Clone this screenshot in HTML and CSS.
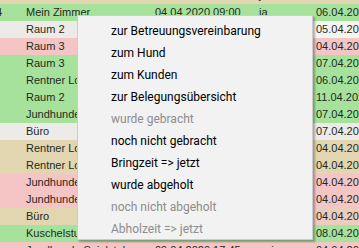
FILE: index.html
```html
<!DOCTYPE html>
<html>
<head>
<meta charset="utf-8">
<link rel="stylesheet" href="styles.css">
</head>
<body>
<div class="view">
  <div class="grid">
    <div class="row tan"><span class="c0"></span><span class="c1">Jundhunde</span><span class="c2">04.04.2020 09:00</span><span class="c3">ja</span><span class="c4">04.04.2020</span></div>
    <div class="row green"><span class="c0">4</span><span class="c1">Mein Zimmer</span><span class="c2">04.04.2020 09:00</span><span class="c3">ja</span><span class="c4">06.04.2020</span></div>
    <div class="row grey"><span class="c0"></span><span class="c1">Raum 2</span><span class="c2">04.04.2020 09:00</span><span class="c3">ja</span><span class="c4 white">05.04.2020</span></div>
    <div class="row pink"><span class="c0"></span><span class="c1">Raum 3</span><span class="c2">04.04.2020 09:00</span><span class="c3">ja</span><span class="c4">04.04.2020</span></div>
    <div class="row green"><span class="c0"></span><span class="c1">Raum 3</span><span class="c2">04.04.2020 09:00</span><span class="c3">ja</span><span class="c4">07.04.2020</span></div>
    <div class="row green"><span class="c0"></span><span class="c1">Rentner Lounge</span><span class="c2">04.04.2020 09:00</span><span class="c3">ja</span><span class="c4">06.04.2020</span></div>
    <div class="row green"><span class="c0"></span><span class="c1">Raum 2</span><span class="c2">04.04.2020 09:00</span><span class="c3">ja</span><span class="c4">11.04.2020</span></div>
    <div class="row green"><span class="c0"></span><span class="c1">Jundhunde</span><span class="c2">04.04.2020 09:00</span><span class="c3">ja</span><span class="c4">07.04.2020</span></div>
    <div class="row grey"><span class="c0"></span><span class="c1">Büro</span><span class="c2">04.04.2020 09:00</span><span class="c3">ja</span><span class="c4">07.04.2020</span></div>
    <div class="row tan"><span class="c0"></span><span class="c1">Rentner Lounge</span><span class="c2">04.04.2020 09:00</span><span class="c3">ja</span><span class="c4">04.04.2020</span></div>
    <div class="row tan"><span class="c0"></span><span class="c1">Rentner Lounge</span><span class="c2">04.04.2020 09:00</span><span class="c3">ja</span><span class="c4">04.04.2020</span></div>
    <div class="row pink"><span class="c0"></span><span class="c1">Jundhunde</span><span class="c2">04.04.2020 09:00</span><span class="c3">ja</span><span class="c4">04.04.2020</span></div>
    <div class="row pink"><span class="c0"></span><span class="c1">Jundhunde</span><span class="c2">04.04.2020 09:00</span><span class="c3">ja</span><span class="c4">04.04.2020</span></div>
    <div class="row tan"><span class="c0"></span><span class="c1">Büro</span><span class="c2">04.04.2020 09:00</span><span class="c3">ja</span><span class="c4 pinkc">04.04.2020</span></div>
    <div class="row green"><span class="c0"></span><span class="c1">Kuschelstube</span><span class="c2">04.04.2020 09:00</span><span class="c3">ja</span><span class="c4">08.04.2020</span></div>
    <div class="row pink"><span class="c0"></span><span class="c1">Jundhunde Spielstube</span><span class="c2">09.04.2020 17:45</span><span class="c3">nein</span><span class="c4">04.04.2020</span></div>
  </div>

  <div class="menu">
    <div class="item">zur Betreuungsvereinbarung</div>
    <div class="item">zum Hund</div>
    <div class="item">zum Kunden</div>
    <div class="item">zur Belegungsübersicht</div>
    <div class="item disabled">wurde gebracht</div>
    <div class="item">noch nicht gebracht</div>
    <div class="item">Bringzeit =&gt; jetzt</div>
    <div class="item">wurde abgeholt</div>
    <div class="item disabled">noch nicht abgeholt</div>
    <div class="item disabled">Abholzeit =&gt; jetzt</div>
  </div>
</div>
</body>
</html>
```

FILE: styles.css
```css
html, body {
  margin: 0;
  padding: 0;
  background: #ffffff;
}
.view {
  position: relative;
  width: 359px;
  height: 248px;
  overflow: hidden;
}
.grid {
  display: flex;
  flex-direction: column;
  margin-top: -13px;
  font-family: "Liberation Sans", Arial, sans-serif;
  font-size: 11px;
  color: #1e2a1e;
}
.row {
  display: flex;
  height: 17px;
  white-space: nowrap;
}
.row span {
  display: block;
  box-sizing: border-box;
  flex: none;
  height: 17px;
  line-height: 17px;
  overflow: hidden;
}
.c0 { width: 4px; text-indent: -4px; }
.c1 { width: 147px; padding-left: 22px; }
.c2 { width: 104px; padding-left: 4px; }
.c3 { width: 58px; padding-left: 4px; }
.c4 { width: 46px; padding-left: 3px; }
.green { background: #a6e29c; }
.grey { background: #ecebe7; }
.pink { background: #f4c5c4; }
.tan { background: #e2d6b1; }
.grey .white { background: #f4f4f2; }
.pinkc { background: #ecccbc; }

.menu {
  position: absolute;
  left: 77px;
  top: 15px;
  width: 236px;
  height: 225px;
  box-sizing: border-box;
  padding: 4px 0 3px;
  background: #f2f2f2;
  border: 1px solid #cccccc;
  box-shadow: 2px 2px 2px rgba(0, 0, 0, 0.3);
  display: flex;
  flex-direction: column;
  font-family: Roboto, "Open Sans", sans-serif;
  font-size: 12px;
  color: #000;
}
.item {
  height: 22px;
  line-height: 22px;
  padding-left: 33px;
  white-space: nowrap;
}
.item.disabled {
  color: #8d8d8d;
}
```
